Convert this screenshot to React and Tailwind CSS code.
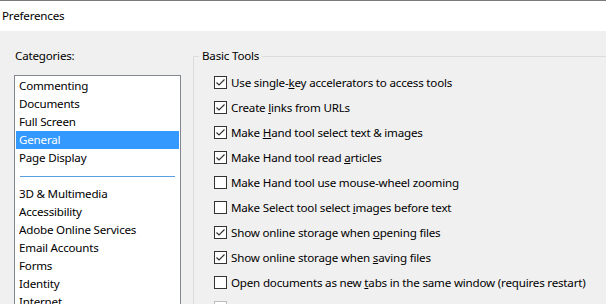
import React from 'react';

const categoriesTop = ['Commenting', 'Documents', 'Full Screen', 'General', 'Page Display'];
const categoriesBottom = ['3D & Multimedia', 'Accessibility', 'Adobe Online Services', 'Email Accounts', 'Forms', 'Identity', 'Internet'];

// label parts: [before, accessKey, after]
const options = [
  { label: ['Use single-', 'k', 'ey accelerators to access tools'], checked: true },
  { label: ['Create ', 'l', 'inks from URLs'], checked: true },
  { label: ['Make ', 'H', 'and tool select text & images'], checked: true },
  { label: ['Make Hand tool read ', 'a', 'rticles'], checked: true },
  { label: ['Make Hand tool use mouse-wheel zooming', '', ''], checked: false },
  { label: ['Make Select tool select ', 'i', 'mages before text'], checked: false },
  { label: ['Show online storage when ', 'o', 'pening files'], checked: true },
  { label: ['Show online storage when ', 's', 'aving files'], checked: true },
  { label: ['Open documents as new ', 't', 'abs in the same window (requires restart)'], checked: false },
  { label: ['Open cross-document links in same window', '', ''], checked: false, disabled: true },
];

const Checkbox = ({ checked, disabled }) => (
  <span
    className={`w-[13px] h-[13px] shrink-0 border bg-white flex items-center justify-center ${
      disabled ? 'border-[#bcbcbc]' : 'border-[#333333]'
    }`}
  >
    {checked && (
      <svg width="11" height="11" viewBox="0 0 11 11">
        <path d="M1.5 5.5 L4 8 L9.5 2.5" fill="none" stroke="#333333" strokeWidth="1.2" />
      </svg>
    )}
  </span>
);

const CategoryItem = ({ name, selected }) => (
  <div
    className={`h-[18px] shrink-0 pl-[3px] flex items-center ${selected ? 'bg-[#3399ff] text-white' : 'text-black'}`}
  >
    {name}
  </div>
);

export default function App() {
  return (
    <div
      className="w-[606px] h-[304px] overflow-hidden bg-[#f0f0f0] text-[11.6px] tracking-[-0.2px] text-black flex flex-col border-t border-[#7a7a7a]"
      style={{ fontFamily: '"Noto Sans", "Open Sans", sans-serif' }}
    >
      {/* Title bar */}
      <div className="h-[30px] shrink-0 bg-white flex items-center pl-[2px]">Preferences</div>

      <div className="flex flex-1 min-h-0">
        {/* Categories */}
        <div className="w-[193px] shrink-0 pl-[14px] flex flex-col">
          <div className="h-[44px] shrink-0 pt-[17px] pl-[1px] leading-[16px]">Categories:</div>
          <div className="w-[167px] flex-1 min-h-0 overflow-hidden bg-white border border-[#828790] border-b-0 pt-[1px] px-[1px] flex flex-col">
            {categoriesTop.map((c) => (
              <CategoryItem key={c} name={c} selected={c === 'General'} />
            ))}
            <div className="h-[18px] shrink-0 flex items-center px-[4px]">
              <div className="h-px w-full bg-[#5a9fe0]" />
            </div>
            {categoriesBottom.map((c) => (
              <CategoryItem key={c} name={c} />
            ))}
          </div>
        </div>

        {/* Basic Tools group */}
        <div className="flex-1 pt-[25px]">
          <div className="relative h-full border-l border-t border-[#dcdcdc] pl-[20px] pt-[13px]">
            <div className="absolute -top-[9px] left-[5px] px-[3px] bg-[#f0f0f0] leading-[16px]">Basic Tools</div>
            <div className="flex flex-col">
              {options.map((o, i) => (
                <div key={i} className="h-[25px] shrink-0 flex items-center gap-[4px]">
                  <Checkbox checked={o.checked} disabled={o.disabled} />
                  <span className={`whitespace-nowrap ${o.disabled ? 'text-[#a0a0a0]' : ''}`}>
                    {o.label[0]}
                    {o.label[1] && <span className="underline">{o.label[1]}</span>}
                    {o.label[2]}
                  </span>
                </div>
              ))}
            </div>
          </div>
        </div>
      </div>
    </div>
  );
}
